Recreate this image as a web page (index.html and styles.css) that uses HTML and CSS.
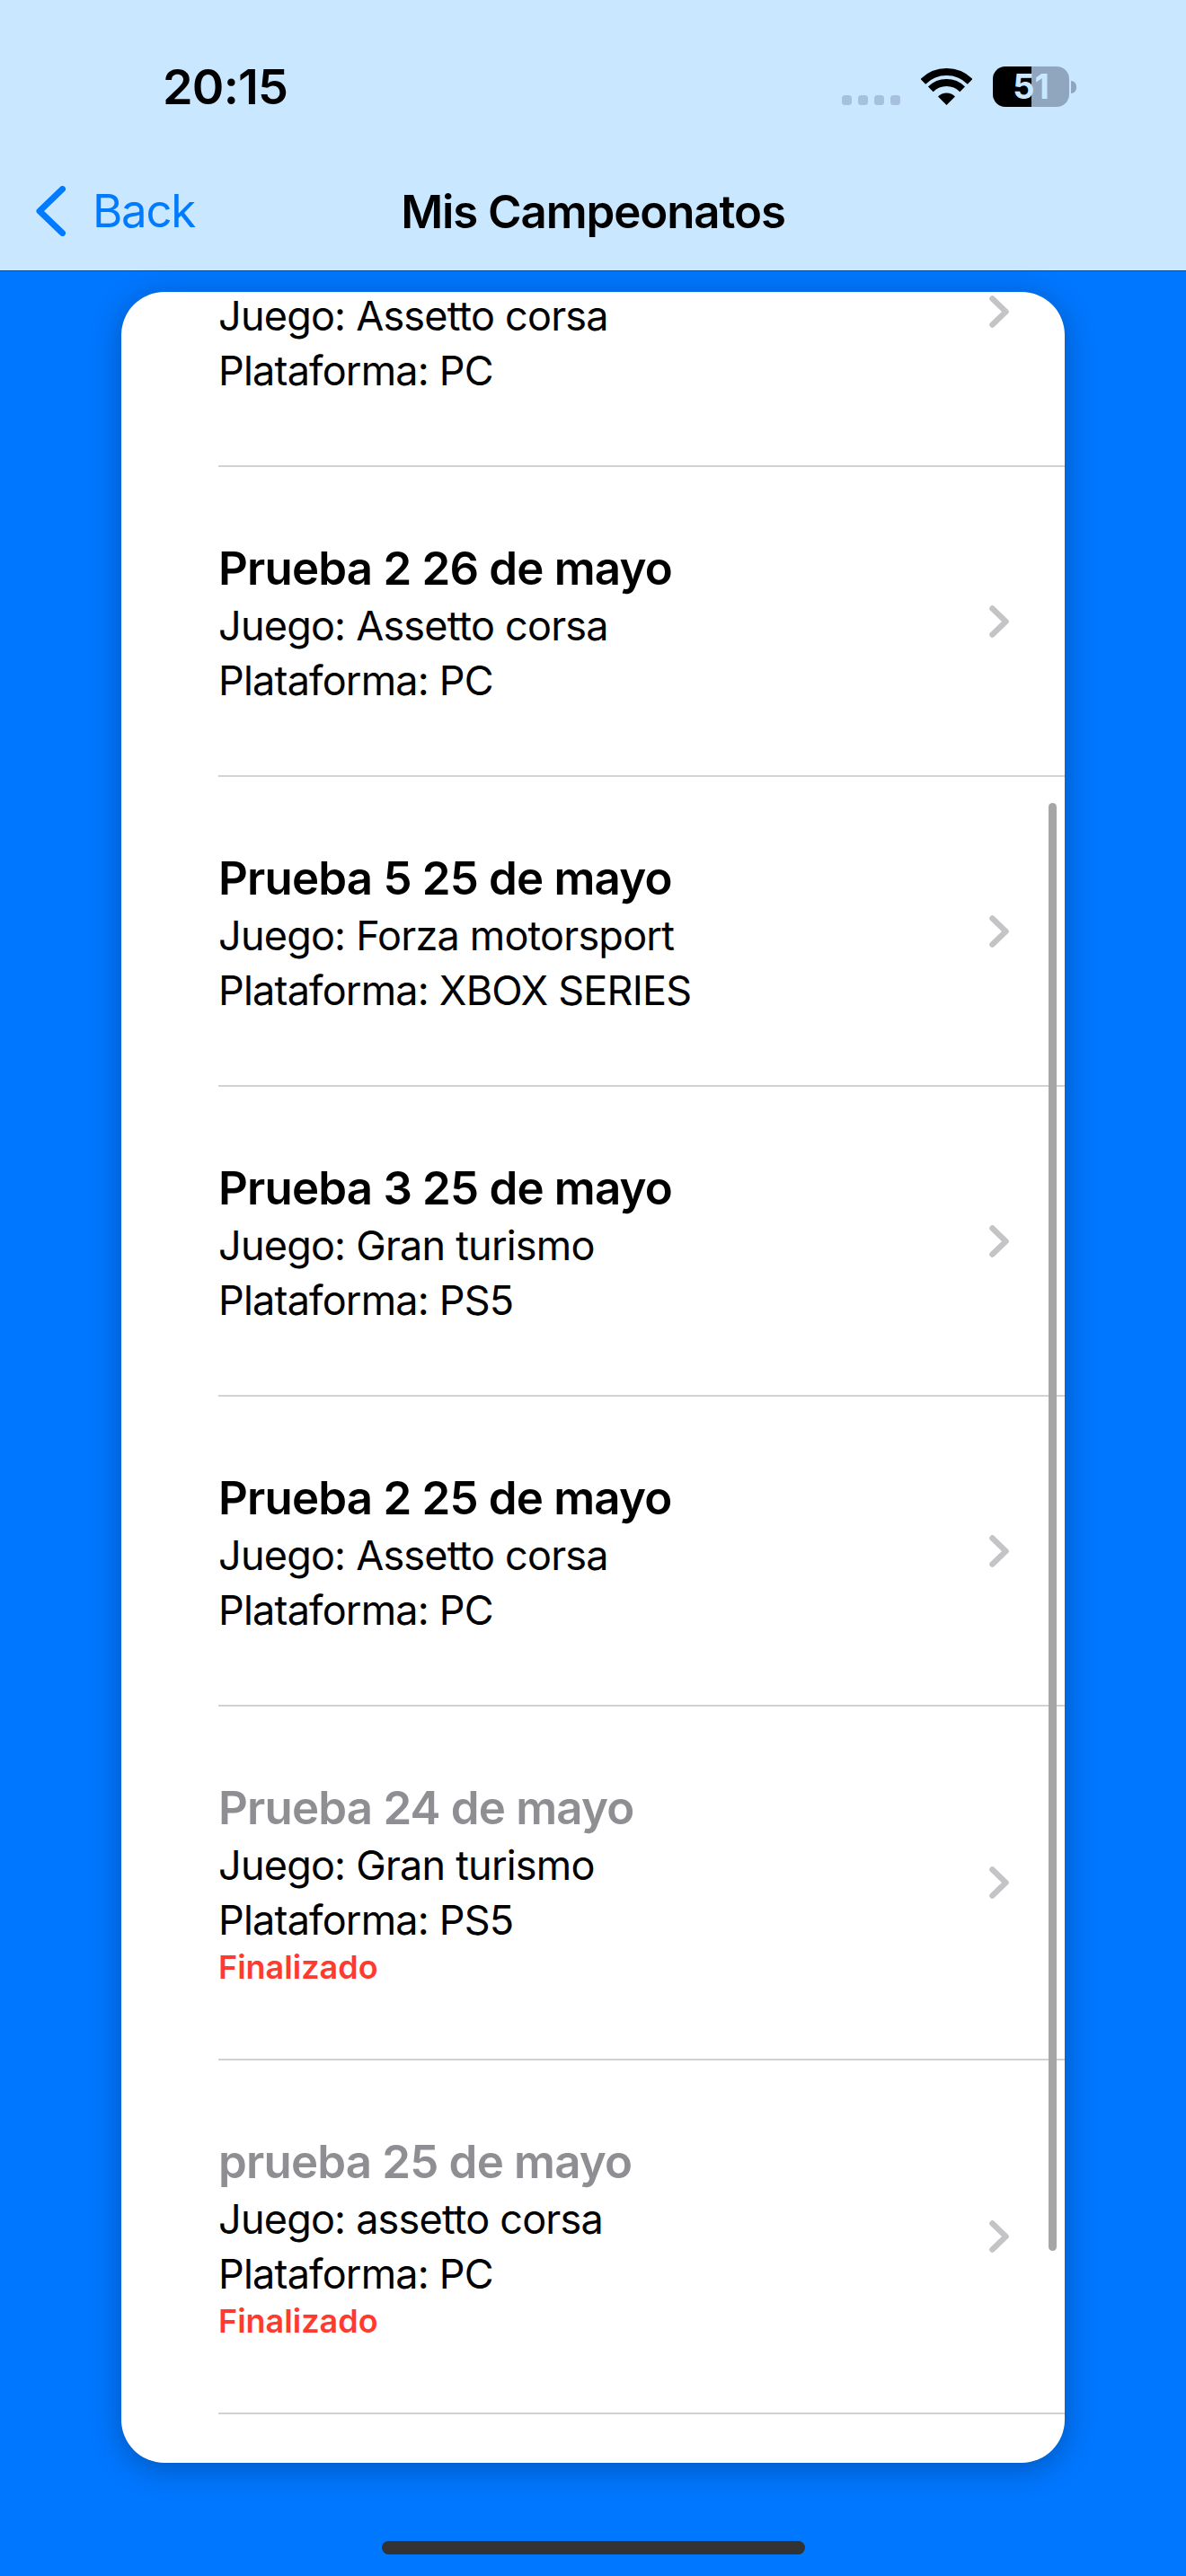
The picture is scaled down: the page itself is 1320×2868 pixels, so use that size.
FILE: index.html
```html
<!DOCTYPE html>
<html lang="es">
<head>
<meta charset="utf-8">
<title>Mis Campeonatos</title>
<link rel="stylesheet" href="styles.css">
</head>
<body>
<div class="screen">
  <header class="header">
    <div class="status">
      <span class="time">20:15</span>
      <div class="status-icons">
        <div class="dots"><i></i><i></i><i></i><i></i></div>
        <svg class="wifi" viewBox="0 0 57 41" width="57" height="41"><path d="M28.500 41 L19 31.500 A 13.400 13.400 0 0 1 38 31.500 Z" fill="#000"/><path d="M10.820 23.320 A 25 25 0 0 1 46.180 23.320" fill="none" stroke="#000" stroke-width="8"/><path d="M2.340 14.840 A 37 37 0 0 1 54.660 14.840" fill="none" stroke="#000" stroke-width="8"/></svg>
        <div class="battery"><div class="battery-body">51</div><div class="battery-tip"></div></div>
      </div>
    </div>
    <nav class="nav">
      <a class="back">
        <svg class="back-icon" viewBox="0 0 33 56" width="33" height="56"><path d="M29.500 3.500 L4 28 L29.500 52.500" fill="none" stroke="#007aff" stroke-width="7" stroke-linecap="round" stroke-linejoin="round"/></svg>
        <span>Back</span>
      </a>
      <h1 class="title">Mis Campeonatos</h1>
    </nav>
  </header>

  <main class="main">
    <section class="card">
      <div class="list">
        <div class="row row-first">
          <div class="info">
            <div class="meta">Juego: Assetto corsa</div>
            <div class="meta">Plataforma: PC</div>
          </div>
          <svg class="chev" viewBox="0 0 22 36" width="22" height="36"><path d="M3.500 3.500 L18.500 18 L3.500 32.500" fill="none" stroke="#c4c4c6" stroke-width="6.500" stroke-linecap="round" stroke-linejoin="round"/></svg>
        </div>
        <div class="row">
          <div class="info">
            <div class="name">Prueba 2 26 de mayo</div>
            <div class="meta">Juego: Assetto corsa</div>
            <div class="meta">Plataforma: PC</div>
          </div>
          <svg class="chev" viewBox="0 0 22 36" width="22" height="36"><path d="M3.500 3.500 L18.500 18 L3.500 32.500" fill="none" stroke="#c4c4c6" stroke-width="6.500" stroke-linecap="round" stroke-linejoin="round"/></svg>
        </div>
        <div class="row">
          <div class="info">
            <div class="name">Prueba 5 25 de mayo</div>
            <div class="meta">Juego: Forza motorsport</div>
            <div class="meta">Plataforma: XBOX SERIES</div>
          </div>
          <svg class="chev" viewBox="0 0 22 36" width="22" height="36"><path d="M3.500 3.500 L18.500 18 L3.500 32.500" fill="none" stroke="#c4c4c6" stroke-width="6.500" stroke-linecap="round" stroke-linejoin="round"/></svg>
        </div>
        <div class="row">
          <div class="info">
            <div class="name">Prueba 3 25 de mayo</div>
            <div class="meta">Juego: Gran turismo</div>
            <div class="meta">Plataforma: PS5</div>
          </div>
          <svg class="chev" viewBox="0 0 22 36" width="22" height="36"><path d="M3.500 3.500 L18.500 18 L3.500 32.500" fill="none" stroke="#c4c4c6" stroke-width="6.500" stroke-linecap="round" stroke-linejoin="round"/></svg>
        </div>
        <div class="row">
          <div class="info">
            <div class="name">Prueba 2 25 de mayo</div>
            <div class="meta">Juego: Assetto corsa</div>
            <div class="meta">Plataforma: PC</div>
          </div>
          <svg class="chev" viewBox="0 0 22 36" width="22" height="36"><path d="M3.500 3.500 L18.500 18 L3.500 32.500" fill="none" stroke="#c4c4c6" stroke-width="6.500" stroke-linecap="round" stroke-linejoin="round"/></svg>
        </div>
        <div class="row row-done">
          <div class="info">
            <div class="name">Prueba 24 de mayo</div>
            <div class="meta">Juego: Gran turismo</div>
            <div class="meta">Plataforma: PS5</div>
            <div class="state">Finalizado</div>
          </div>
          <svg class="chev" viewBox="0 0 22 36" width="22" height="36"><path d="M3.500 3.500 L18.500 18 L3.500 32.500" fill="none" stroke="#c4c4c6" stroke-width="6.500" stroke-linecap="round" stroke-linejoin="round"/></svg>
        </div>
        <div class="row row-done">
          <div class="info">
            <div class="name">prueba 25 de mayo</div>
            <div class="meta">Juego: assetto corsa</div>
            <div class="meta">Plataforma: PC</div>
            <div class="state">Finalizado</div>
          </div>
          <svg class="chev" viewBox="0 0 22 36" width="22" height="36"><path d="M3.500 3.500 L18.500 18 L3.500 32.500" fill="none" stroke="#c4c4c6" stroke-width="6.500" stroke-linecap="round" stroke-linejoin="round"/></svg>
        </div>
      </div>
      <div class="scrollbar"></div>
    </section>
    <div class="home-bar"></div>
  </main>
</div>
</body>
</html>
```

FILE: styles.css
```css
* { box-sizing: border-box; }

html, body {
  margin: 0;
  padding: 0;
}

body {
  font-family: Inter, "Liberation Sans", sans-serif;
  color: #000;
}

.screen {
  width: 1320px;
  height: 2868px;
  display: flex;
  flex-direction: column;
  overflow: hidden;
  background: #0077ff;
}

.header {
  height: 302px;
  flex: none;
  background: #c9e8ff;
  border-bottom: 1px solid #0a4f96;
}

.status {
  height: 190px;
  padding: 65px 122px 0 181px;
  display: flex;
  justify-content: space-between;
  align-items: flex-start;
}

.time {
  font-size: 54px;
  line-height: 64px;
  font-weight: 600;
  letter-spacing: -0.8px;
}

.status-icons {
  display: flex;
  align-items: flex-start;
  padding-top: 9px;
}

.dots {
  display: flex;
  gap: 7px;
  margin-top: 32px;
  margin-right: 23px;
}

.dots i {
  width: 11px;
  height: 11px;
  border-radius: 3.500px;
  background: #a6c0de;
}

.wifi {
  margin-top: 2px;
  margin-right: 23px;
}

.battery {
  display: flex;
  align-items: center;
}

.battery-body {
  width: 85px;
  height: 45px;
  border-radius: 14px;
  background: linear-gradient(90deg, #000 0, #000 43px, #90a6bf 43px);
  color: #c9e8ff;
  font-size: 38px;
  line-height: 45px;
  font-weight: 700;
  text-align: center;
}

.battery-tip {
  width: 6px;
  height: 14px;
  margin-left: 2px;
  border-radius: 0 7px 7px 0;
  background: #90a6bf;
}

.nav {
  position: relative;
  height: 111px;
  display: flex;
  justify-content: center;
}

.back {
  position: absolute;
  left: 40px;
  top: 17px;
  display: flex;
  align-items: center;
  gap: 30px;
  color: #007aff;
  font-size: 51px;
  line-height: 56px;
  letter-spacing: -1.3px;
}

.back-icon {
  flex: none;
}

.title {
  margin: 0;
  padding-top: 16px;
  font-size: 51px;
  line-height: 60px;
  font-weight: 600;
  letter-spacing: -1.1px;
}

.main {
  flex: 1;
  display: flex;
  flex-direction: column;
  align-items: center;
  padding-top: 23px;
  background: #0077ff;
}

.card {
  position: relative;
  width: 1050px;
  height: 2417px;
  flex: none;
  overflow: hidden;
  border-radius: 48px;
  background: #fff;
  box-shadow: 0 6px 34px rgba(0, 0, 0, 0.28);
}

.list {
  padding-left: 108px;
}

.row {
  height: 345px;
  padding-right: 62px;
  display: flex;
  align-items: center;
  justify-content: space-between;
  border-bottom: 2px solid #d2d2d4;
}

.row-done {
  height: 394px;
}

.row-first {
  height: 195px;
}

.row-first .chev {
  align-self: flex-start;
  margin-top: 4px;
}

.info {
  align-self: flex-start;
  padding-top: 82px;
}

.row-first .info {
  padding-top: 1px;
}

.row-first .meta:first-child {
  margin-bottom: 5px;
  line-height: 51px;
}

.name {
  margin-bottom: 3px;
  font-size: 51px;
  line-height: 61px;
  font-weight: 600;
  letter-spacing: -0.8px;
}

.row-done .name {
  color: #8e8e93;
}

.meta {
  font-size: 45px;
  line-height: 61px;
  letter-spacing: -0.8px;
}

.state {
  margin-top: 1px;
  font-size: 36px;
  line-height: 42px;
  font-weight: 600;
  color: #ff3b30;
}

.chev {
  flex: none;
}

.scrollbar {
  position: absolute;
  right: 9px;
  top: 569px;
  width: 9px;
  height: 1612px;
  border-radius: 5px;
  background: #a6a6a6;
}

.home-bar {
  width: 471px;
  height: 15px;
  margin-top: 87px;
  border-radius: 8px;
  background: #333;
}
```
